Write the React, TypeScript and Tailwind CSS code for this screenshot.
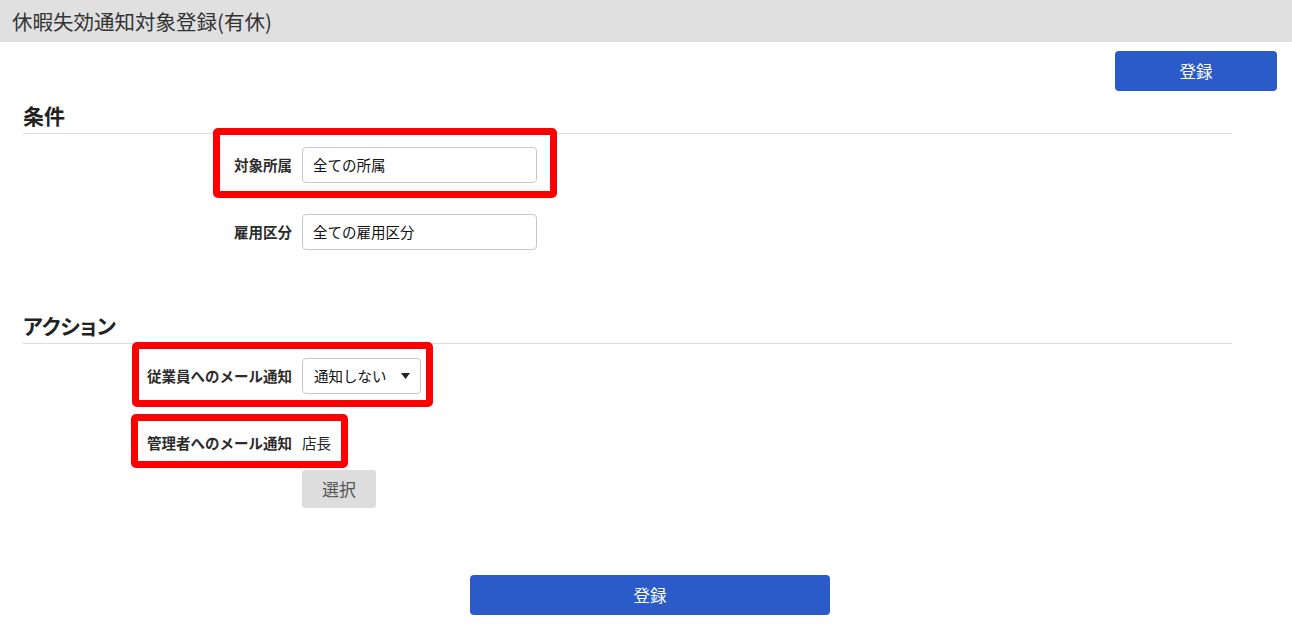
import React from 'react';

const Field = ({ label, children }: { label: string; children: React.ReactNode }) => (
  <div className="flex items-center">
    <div className="w-[279px] pr-[10px] text-right text-[14.5px] font-bold text-[#2b2b2b]">{label}</div>
    {children}
  </div>
);

const SectionTitle = ({ title }: { title: string }) => (
  <div className="mr-[37px] flex h-[34px] items-center border-b border-[#dcdcdc] pb-[2px] text-[21px] font-bold text-[#222] [font-feature-settings:'palt']">
    {title}
  </div>
);

const App = () => {
  return (
    <div className="relative min-h-screen bg-white font-['Noto_Sans_CJK_JP',sans-serif] text-[#333]">
      {/* Header */}
      <div className="flex h-[42px] items-center bg-[#e0e0e0] pl-[12px] text-[20.5px] text-[#333]">
        休暇失効通知対象登録(有休)
      </div>

      <div className="flex justify-end pt-[9px] pr-[15px]">
        <button className="h-[40px] w-[162px] rounded-[4px] bg-[#2a5bc9] text-[16.5px] text-white">登録</button>
      </div>

      <div className="ml-[23px] mr-[23px]">
        {/* 条件 */}
        <div className="mt-[9px]">
          <SectionTitle title="条件" />
        </div>
        <div className="mt-[13px] flex flex-col gap-[31px]">
          <Field label="対象所属">
            <div className="flex h-[36px] w-[235px] items-center rounded-[4px] border border-[#c8c8c8] pl-[10px] text-[14.5px] text-[#111]">
              全ての所属
            </div>
          </Field>
          <Field label="雇用区分">
            <div className="flex h-[36px] w-[235px] items-center rounded-[4px] border border-[#c8c8c8] pl-[10px] text-[14.5px] text-[#111]">
              全ての雇用区分
            </div>
          </Field>
        </div>

        {/* アクション */}
        <div className="mt-[60px]">
          <SectionTitle title="アクション" />
        </div>
        <div className="mt-[14px] flex flex-col gap-[31px]">
          <Field label="従業員へのメール通知">
            <div className="flex h-[36px] w-[119px] items-center justify-between rounded-[4px] border border-[#c8c8c8] pl-[11px] pr-[10px] text-[14.5px] text-[#111]">
              <span>通知しない</span>
              <svg width="9" height="6" viewBox="0 0 9 6">
                <path d="M0 0h9L4.5 6z" fill="#222" />
              </svg>
            </div>
          </Field>
          <Field label="管理者へのメール通知">
            <div className="flex h-[36px] items-center text-[14.5px] text-[#222]">店長</div>
          </Field>
        </div>
        <div className="mt-[9px] pl-[279px]">
          <button className="h-[38px] w-[74px] rounded-[3px] bg-[#dddddd] text-[17px] text-[#555]">選択</button>
        </div>

        <div className="mt-[67px] mr-[-8px] flex justify-center">
          <button className="h-[40px] w-[360px] rounded-[4px] bg-[#2a5bc9] text-[16.5px] text-white">登録</button>
        </div>
      </div>

      {/* annotation boxes */}
      <div className="pointer-events-none absolute left-[213px] top-[128px] h-[70px] w-[344px] rounded-[5px] border-[7px] border-[#ff0000]" />
      <div className="pointer-events-none absolute left-[132px] top-[342px] h-[65px] w-[301px] rounded-[5px] border-[7px] border-[#ff0000]" />
      <div className="pointer-events-none absolute left-[131px] top-[414px] h-[54px] w-[217px] rounded-[5px] border-[7px] border-[#ff0000]" />
    </div>
  );
};

export default App;
